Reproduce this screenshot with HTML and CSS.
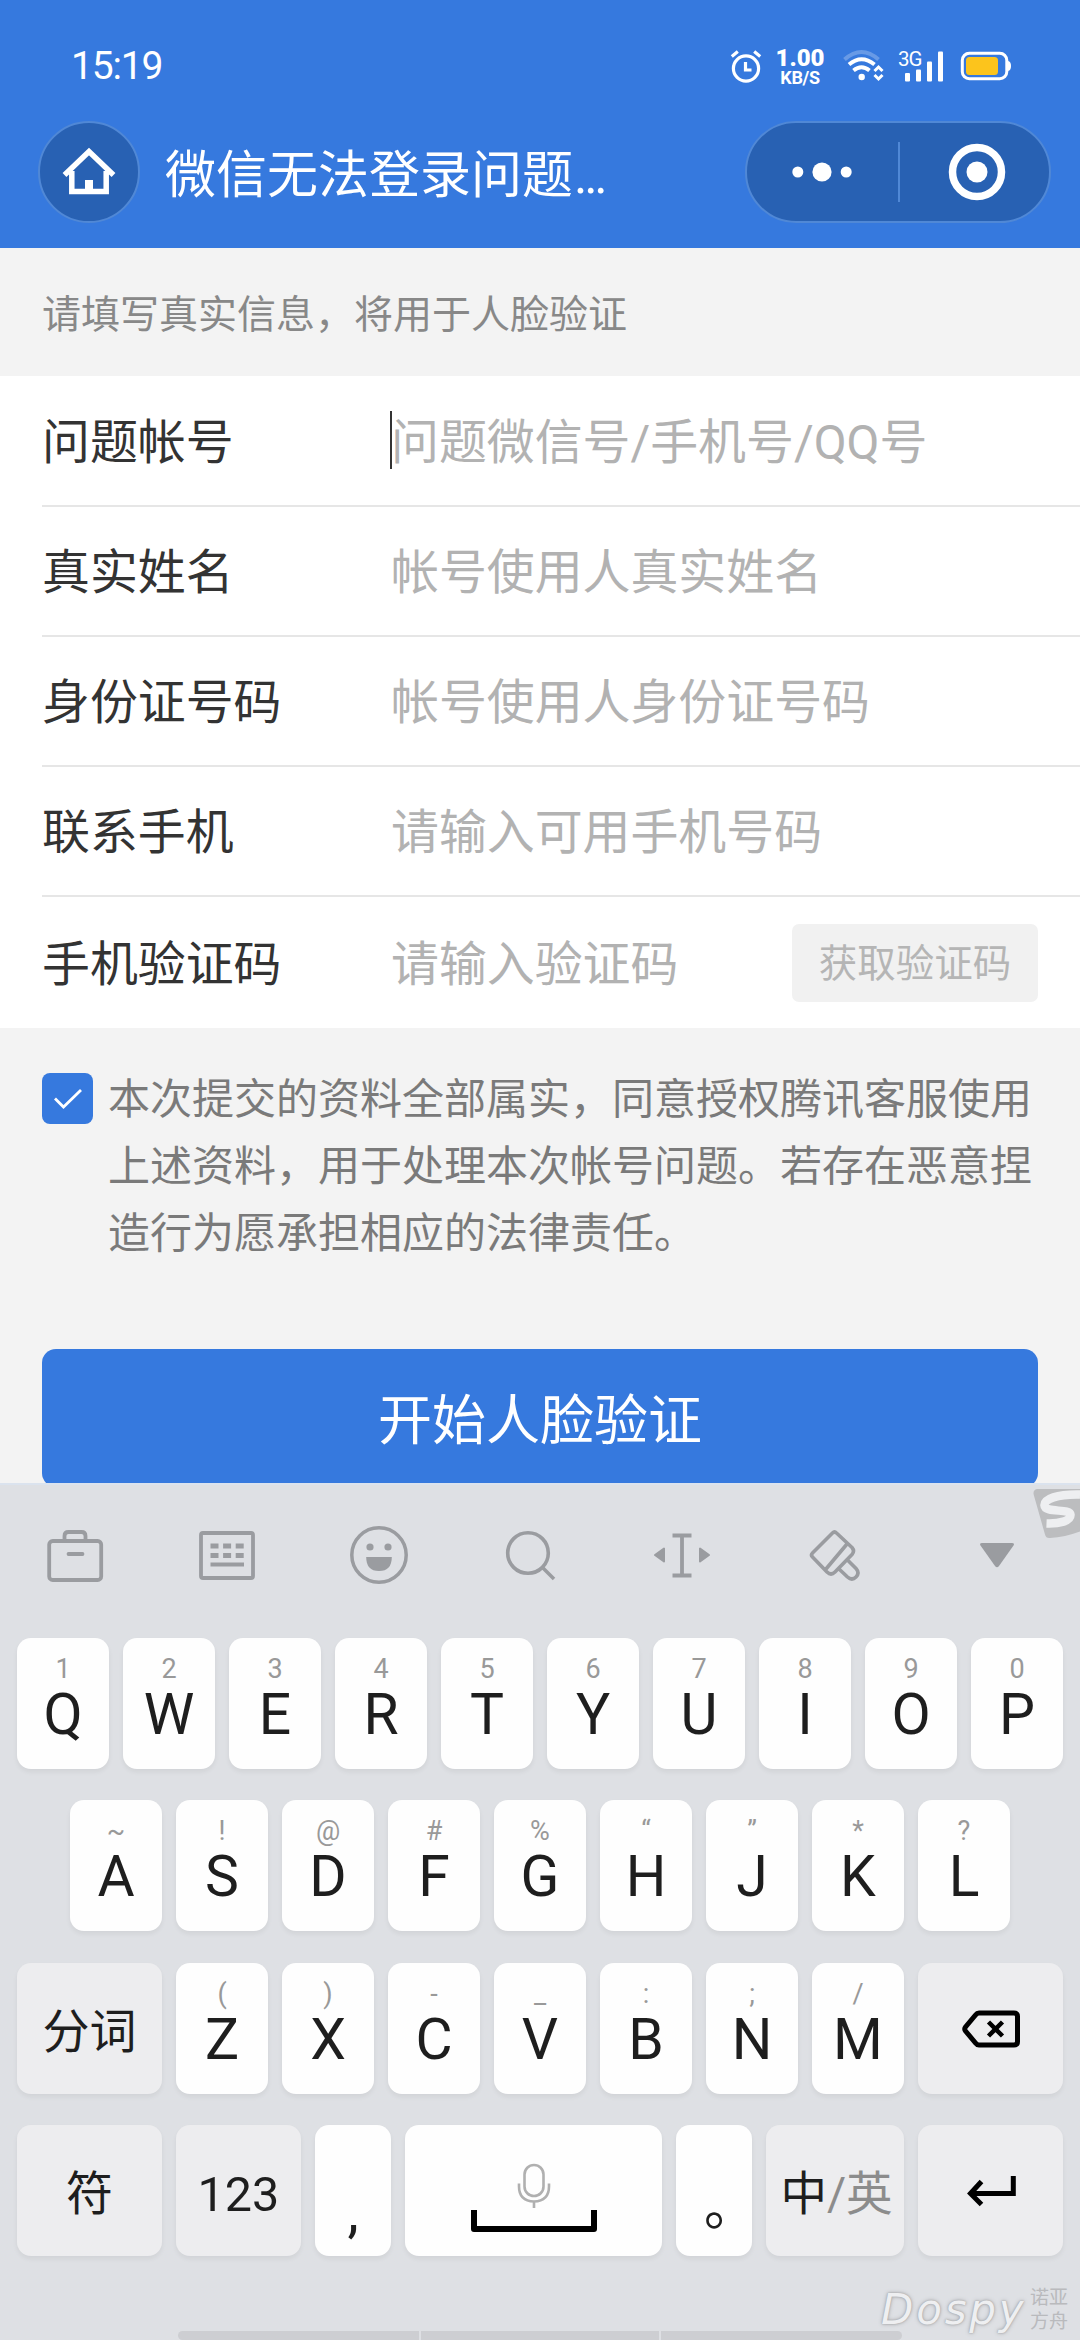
FILE: index.html
```html
<!DOCTYPE html>
<html lang="zh-CN">
<head>
<meta charset="utf-8">
<title>微信无法登录问题</title>
<link rel="stylesheet" href="styles.css">
</head>
<body>
<div class="screen">
  <header class="header">
    <div class="status">
      <span class="time">15:19</span>
      <div class="status-right">
        <svg class="ic-alarm" width="32" height="34" viewBox="0 0 32 34" fill="none" stroke="#fff" stroke-width="3.2"><circle cx="16" cy="19.500" r="12.600"/><path d="M15.500 13v8h6M1.800 7.500l6-5M30.200 7.500l-6-5"/></svg>
        <div class="speed"><b>1.00</b><i>KB/S</i></div>
        <svg class="ic-wifi" width="42" height="34" viewBox="0 0 42 34" fill="none" stroke="#fff" stroke-width="4"><path d="M1.500 10.500q17-15 34 0" stroke="#fff" opacity=".25"/><path d="M6 15.500q12.500-10.500 25.500 0M10.500 21.500q8-6.500 16 0"/><circle cx="18.700" cy="28" r="3.200" fill="#fff" stroke="none"/><path d="M31.500 22l4-4 4 4M31.500 26l4 4 4-4" stroke-width="3"/></svg>
        <div class="signal"><span>3G</span>
          <svg width="48" height="34" viewBox="0 0 48 34" fill="#fff"><rect x="8" y="24" width="5" height="8.500" rx="1"/><rect x="19" y="20.500" width="5" height="12" rx="1"/><rect x="30" y="12.500" width="5" height="20" rx="1"/><rect x="41" y="2.500" width="5" height="30" rx="1"/></svg>
        </div>
        <svg class="ic-battery" width="52" height="30" viewBox="0 0 52 30"><rect x="2.300" y="2.300" width="44.500" height="25.400" rx="7" fill="none" stroke="#fff" stroke-width="3"/><path d="M48 10q3 .5 3 5t-3 5z" fill="#fff"/><rect x="6" y="6" width="32" height="18" rx="3.500" fill="#fcc41c"/></svg>
      </div>
    </div>
    <div class="nav">
      <div class="home"><svg width="54" height="50" viewBox="0 0 54 50" fill="none" stroke="#fff" stroke-width="5.500"><path d="M2.500 28L27 4.500 51.500 28M9.800 24v20.500h34.400V24"/><path d="M27 33v12" stroke-width="8"/></svg></div>
      <h1 class="title">微信无法登录问题<span>...</span></h1>
      <div class="capsule">
        <svg width="62" height="24" viewBox="0 0 62 24" fill="#fff"><circle cx="6.800" cy="12" r="5.500"/><circle cx="31" cy="12" r="9.600"/><circle cx="55.200" cy="12" r="5.500"/></svg>
        <span class="sep"></span>
        <svg width="58" height="58" viewBox="0 0 58 58"><circle cx="29" cy="29" r="24.500" fill="none" stroke="#fff" stroke-width="7.500"/><circle cx="29" cy="29" r="10.500" fill="#fff"/></svg>
      </div>
    </div>
  </header>

  <main class="page">
    <p class="notice">请填写真实信息，将用于人脸验证</p>
    <div class="form">
      <div class="field"><label>问题帐号</label><span class="ph focus">问题微信号/手机号/QQ号</span></div>
      <div class="field"><label>真实姓名</label><span class="ph">帐号使用人真实姓名</span></div>
      <div class="field"><label>身份证号码</label><span class="ph">帐号使用人身份证号码</span></div>
      <div class="field"><label>联系手机</label><span class="ph">请输入可用手机号码</span></div>
      <div class="field"><label>手机验证码</label><span class="ph">请输入验证码</span><span class="code">获取验证码</span></div>
    </div>
    <div class="agree">
      <span class="check"><svg width="30" height="22" viewBox="0 0 30 22" fill="none" stroke="#fff" stroke-width="2.800"><path d="M2 10.500l8.500 8.500L28 2"/></svg></span>
      <p>本次提交的资料全部属实，同意授权腾讯客服使用上述资料，用于处理本次帐号问题。若存在恶意捏造行为愿承担相应的法律责任。</p>
    </div>
    <div class="submit">开始人脸验证</div>
  </main>

  <section class="keyboard">
    <div class="tools">
      <svg width="60" height="60" viewBox="0 0 60 60" fill="none" stroke="#9a9ca0" stroke-width="3.800"><rect x="4.200" y="16" width="52" height="39" rx="3.500"/><path d="M19.500 16v-5q0-4 4-4h13q4 0 4 4v5"/><path d="M23.500 29h14" stroke-linecap="round"/></svg>
      <svg width="60" height="60" viewBox="0 0 60 60" fill="none" stroke="#9a9ca0" stroke-width="3.800"><rect x="4" y="8" width="52" height="45" rx="2"/><path d="M13.500 21h34M13.500 30.500h34" stroke-width="5" stroke-dasharray="8 4.600"/><path d="M13.500 39.500h33.500"/></svg>
      <svg width="60" height="60" viewBox="0 0 60 60" fill="none" stroke="#9a9ca0" stroke-width="3.500"><circle cx="30" cy="30" r="27.200"/><g fill="#9a9ca0" stroke="none"><circle cx="21" cy="22" r="3.600"/><circle cx="39" cy="22" r="3.600"/><path d="M17.200 32h25.600q0 14-12.800 14T17.200 32z"/></g></svg>
      <svg width="60" height="60" viewBox="0 0 60 60" fill="none" stroke="#9a9ca0" stroke-width="3.600"><circle cx="28" cy="28" r="20.300"/><path d="M42.500 42.500L54 54"/></svg>
      <svg width="60" height="60" viewBox="0 0 60 60" fill="none" stroke="#9a9ca0" stroke-width="3.800"><path d="M20.500 10.500h19M20.500 50.500h19M30 10.500v40"/><path d="M12 23.500v13L3 30zM48 23.500v13l9-6.500z" fill="#9a9ca0" stroke-width="2" stroke-linejoin="round"/></svg>
      <svg width="60" height="60" viewBox="0 0 60 60" fill="none" stroke="#9a9ca0" stroke-width="3.600" stroke-linejoin="round"><path d="M32.500 8q-2-2-4 0L8.500 28q-2 2 0 4L23 47q4 4 8 0L48 29.500q3-3.500 0-7zM43 19L22 44M34.500 43.500l9 8.500q4.500 4 8.500 0t0-8.500L43.500 35"/></svg>
      <svg class="fold" width="60" height="60" viewBox="0 0 60 60" fill="#9a9ca0"><path d="M15 18h30q3 0 1.500 2.500L32 41q-2 2.500-4 0L13.500 20.500Q12 18 15 18z"/></svg>
    </div>
    <svg class="sogou" width="47" height="54" viewBox="0 0 47 54"><path d="M4 2H47V44.500Q32 50 17 51q-4 .5-5-3.500L.800 8Q-.5 3 4 2z" fill="#bcbdbf"/><path d="M47 7.500C24 7 11 12 11.500 18.500 12 26.500 37 21 37.500 27.500 38 34 26 37 13.500 36.500" fill="none" stroke="#eeeff1" stroke-width="8.500"/></svg>

    <div class="keys">
      <div class="row">
        <div class="key"><small>1</small>Q</div><div class="key"><small>2</small>W</div><div class="key"><small>3</small>E</div><div class="key"><small>4</small>R</div><div class="key"><small>5</small>T</div><div class="key"><small>6</small>Y</div><div class="key"><small>7</small>U</div><div class="key"><small>8</small>I</div><div class="key"><small>9</small>O</div><div class="key"><small>0</small>P</div>
      </div>
      <div class="row">
        <div class="key"><small>~</small>A</div><div class="key"><small>!</small>S</div><div class="key"><small>@</small>D</div><div class="key"><small>#</small>F</div><div class="key"><small>%</small>G</div><div class="key"><small>“</small>H</div><div class="key"><small>”</small>J</div><div class="key"><small>*</small>K</div><div class="key"><small>?</small>L</div>
      </div>
      <div class="row">
        <div class="key fn side">分词</div><div class="key"><small>(</small>Z</div><div class="key"><small>)</small>X</div><div class="key"><small>-</small>C</div><div class="key"><small>_</small>V</div><div class="key"><small>:</small>B</div><div class="key"><small>;</small>N</div><div class="key"><small>/</small>M</div>
        <div class="key fn side"><svg width="60" height="40" viewBox="0 0 60 40" fill="none" stroke="#000" stroke-width="5"><path d="M18 4h35q3.500 0 3.500 3.500v25q0 3.500-3.500 3.500H18q-2 0-3.500-2L4.500 22q-1.500-2 0-4L14.500 6q1.500-2 3.500-2z"/><path d="M27.500 13l14 14M41.500 13l-14 14" stroke-width="4.500"/></svg></div>
      </div>
      <div class="row">
        <div class="key fn side">符</div>
        <div class="key fn num">123</div>
        <div class="key punct comma">,</div>
        <div class="key space">
          <svg width="34" height="46" viewBox="0 0 34 46" fill="none" stroke="#b0b0b0" stroke-width="2.600"><rect x="7.500" y="2" width="19" height="31" rx="9.500"/><path d="M2 20.500v3Q2 38 17 38.500 32 38 32 23.500v-3M17 38.500V45"/></svg>
          <svg width="128" height="24" viewBox="0 0 128 24" fill="none" stroke="#000" stroke-width="6" stroke-linejoin="round"><path d="M4 1v19h120V1"/></svg>
        </div>
        <div class="key punct stop">。</div>
        <div class="key fn lang">中<em>/英</em></div>
        <div class="key fn side enter"><svg width="50" height="32" viewBox="0 0 50 32" fill="none" stroke="#000" stroke-width="5"><path d="M46.300 1v17.500H4M14.500 6.500l-11 12 11 11"/></svg></div>
      </div>
    </div>
    <div class="handles"><span></span><span></span><span></span></div>
    <div class="mark"><b>Dospy</b><span>诺亚<br>方舟</span></div>
  </section>
</div>
</body>
</html>
```
FILE: styles.css
```css
* { box-sizing: border-box; margin: 0; padding: 0; }
body { background: #f3f3f3; font-family: Roboto, "Noto Sans CJK SC", sans-serif; }
svg { display: block; flex: none; }
.screen { width: 1080px; height: 2340px; overflow: hidden; display: flex; flex-direction: column; background: #f3f3f3; }

/* header */
.header { height: 248px; background: #3679de; color: #fff; }
.status { height: 121px; padding: 11px 68px 0 71px; display: flex; align-items: center; justify-content: space-between; }
.time { font-size: 39px; letter-spacing: -1.2px; }
.status-right { display: flex; align-items: center; }
.speed { width: 50px; margin-left: 13px; margin-right: 1px; display: flex; flex-direction: column; align-items: center; font-weight: 700; line-height: 17px; padding-top: 1px; }
.speed b { font-size: 24px; line-height: 21px; }
.speed i { font-size: 18px; font-style: normal; line-height: 17px; letter-spacing: -.3px; }
.ic-wifi { margin-left: 17px; }
.signal { margin-left: 12px; position: relative; }
.signal span { position: absolute; left: 1px; top: -1px; font-size: 20.500px; line-height: 22px; letter-spacing: -1px; }
.ic-battery { margin-left: 15px; }
.nav { display: flex; align-items: center; padding: 0 29px 0 38px; height: 102px; }
.home { width: 102px; height: 102px; border-radius: 50%; background: #2861b3; border: 2px solid #5088d6; display: flex; align-items: center; justify-content: center; }
.title { flex: 1; margin-left: 25px; font-size: 51px; font-weight: 400; line-height: 60px; padding-top: 8px; white-space: nowrap; }
.title span { letter-spacing: -3.300px; margin-left: 1px; }
.capsule { width: 306px; height: 102px; border-radius: 51px; background: #2861b3; border: 2px solid #5088d6; display: flex; align-items: center; padding: 0 43px 0 44px; justify-content: space-between; }
.sep { width: 2px; height: 60px; margin-right: 4px; background: #5088d6; }

/* form */
.page { height: 1235px; flex: none; overflow: hidden; }
.notice { height: 128px; padding: 2px 42px 0; line-height: 130px; font-size: 39px; color: #888; }
.form { background: #fff; padding-left: 42px; }
.field { height: 130px; display: flex; align-items: center; font-size: 47.900px; border-bottom: 2px solid #e6e6e6; padding: 0 42px 6px 0; }
.field:first-child { height: 131px; padding-bottom: 5px; }
.field:last-child { height: 131px; border-bottom: 0; }
.field label { width: 349px; color: #333; }
.ph { flex: 1; color: #b2b2b2; white-space: nowrap; position: relative; }
.focus::before { content: ""; position: absolute; left: -1px; top: 50%; width: 2px; height: 58px; margin-top: -27px; background: #333; }
.code { width: 246px; height: 78px; margin-bottom: -6px; border-radius: 7px; background: #f1f1f1; color: #b5b5b5; font-size: 38.500px; line-height: 80px; text-align: center; }
.agree { display: flex; padding: 36px 40px 0 42px; }
.check { flex: none; width: 51px; height: 51px; margin: 9px 15px 0 0; border-radius: 8px; background: #3679de; display: flex; align-items: center; justify-content: center; }
.agree p { font-size: 42px; line-height: 67px; color: #7a7a7a; width: 925px; padding-top: 2px; }
.submit { margin: 82px 42px 0; height: 138px; border-radius: 14px; background: #3679de; color: #fff; font-size: 54px; line-height: 146px; text-align: center; }

/* keyboard */
.keyboard { position: relative; flex: 1; background: #dee0e4; border-top: 2px solid #dbe3ee; color: #1e1e1e; }
.tools { height: 153px; padding: 10px 53px 0 45px; display: flex; align-items: center; justify-content: space-between; padding-bottom: 23px; }
.fold { margin-left: 11px; }
.sogou { position: absolute; right: 0; top: 2px; }
.keys { display: flex; flex-direction: column; gap: 31.300px; }
.row { display: flex; gap: 14px; justify-content: center; }
.key { width: 92px; height: 131px; border-radius: 14px; background: #fefefe; box-shadow: 0 3px 5px rgba(0,0,0,.06); display: flex; flex-direction: column; align-items: center; font-size: 57px; line-height: 60px; }
.key small { font-size: 27px; line-height: 30px; color: #999; margin: 16px 0 1px; }
.fn { background: #ededef; flex-direction: row; justify-content: center; font-size: 47px; padding-top: 7px; }
.fn svg { margin-top: -6px; }
.side { width: 145px; }
.enter { padding-left: 2px; }
.num { width: 125px; font-size: 48.500px; padding-top: 9px; }
.punct { width: 76px; justify-content: flex-end; }
.comma { padding-bottom: 14px; }
.stop { font-size: 52px; padding: 0 0 18px 32px; }
.space { width: 257px; padding-top: 38px; }
.lang { width: 138px; padding-left: 3px; font-size: 46.500px; }
.lang em { font-style: normal; color: #8c8c8c; }
.handles { position: absolute; left: 178px; bottom: 0; display: flex; gap: 2px; }
.handles span { height: 9px; width: 241px; background: #cdced2; }
.handles span:first-child { border-radius: 5px 0 0 5px; }
.handles span:nth-child(2) { width: 238px; }
.handles span:last-child { border-radius: 0 5px 5px 0; }
.mark { position: absolute; left: 881px; bottom: 6px; display: flex; align-items: center; color: #eeeff1; text-shadow: 0 0 2px #a8a9ac, 0 0 4px #a8a9ac, 0 0 1px #b4b5b8; }
.mark b { width: 149px; font: italic 400 42px/46px "DejaVu Sans", sans-serif; letter-spacing: 2.800px; }
.mark span { font-size: 19px; line-height: 24px; color: #b9babd; text-shadow: none; }
```
